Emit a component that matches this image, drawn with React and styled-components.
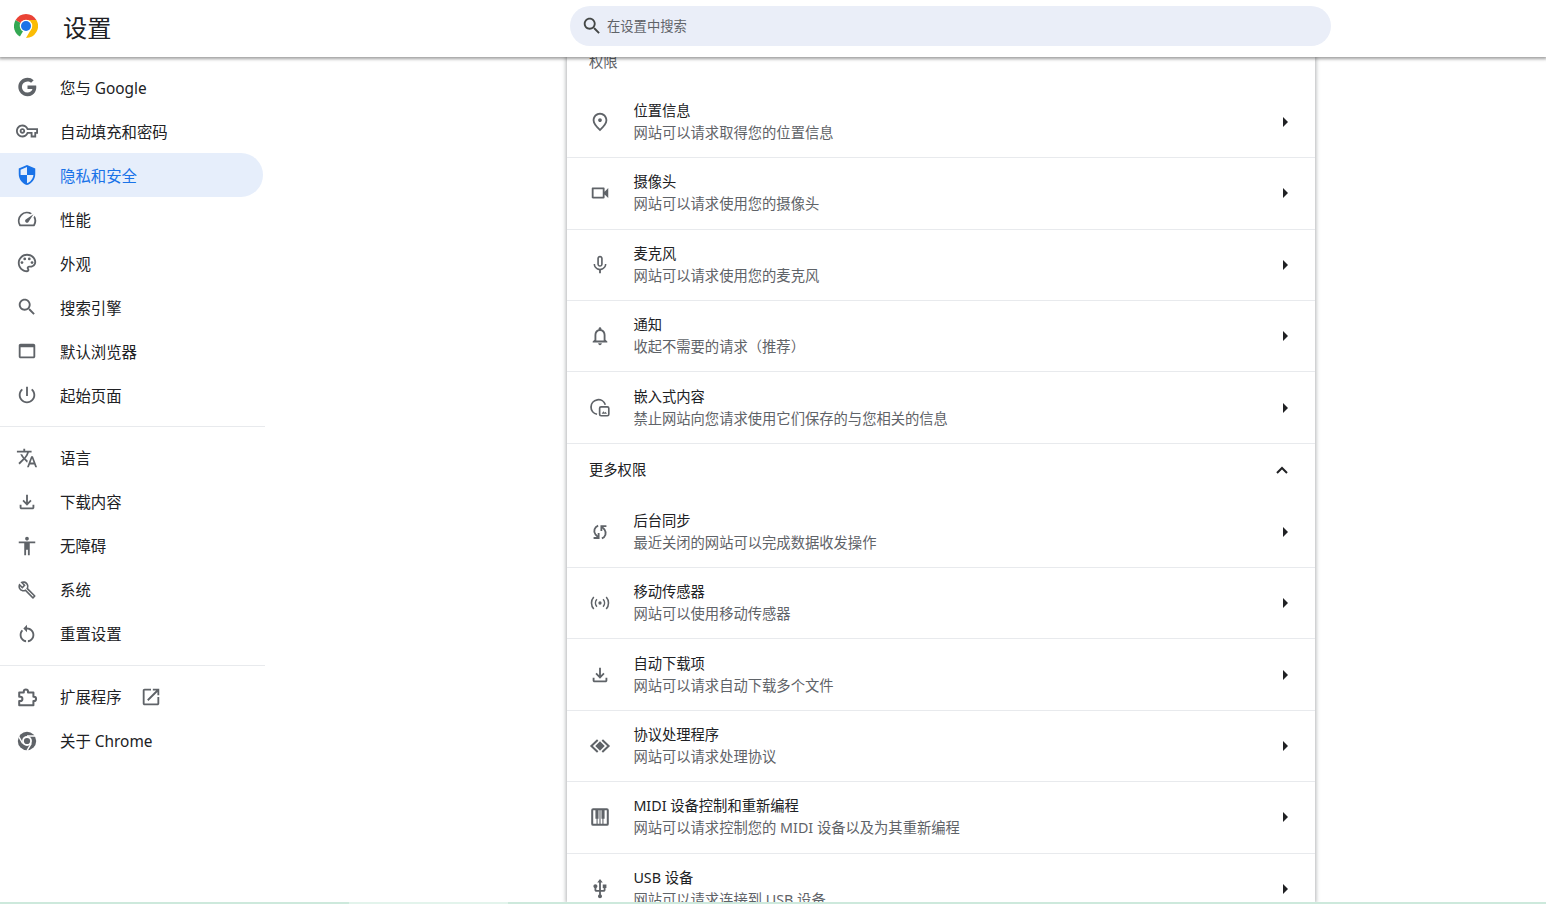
import React from "react";
import styled, { createGlobalStyle } from "styled-components";

const Global = createGlobalStyle`
  html, body { margin: 0; padding: 0; height: 100%; background: #fff; overflow: hidden; }
  #root { height: 100%; }
  * { box-sizing: border-box; }
  body { font-family: "Noto Sans", "Noto Sans CJK SC", "Liberation Sans", sans-serif; color: #202124; }
`;

const Page = styled.div`
  height: 100vh;
  display: flex;
  flex-direction: column;
  overflow: hidden;
`;
const Toolbar = styled.header`
  flex: 0 0 57px;
  height: 57px;
  display: flex;
  align-items: center;
  background: #fff;
  box-shadow: 0 1px 3px 1px rgba(0, 0, 0, 0.38);
  position: relative;
  z-index: 2;
`;
const Brand = styled.div`
  flex: 0 0 570px;
  display: flex;
  align-items: center;
  padding-left: 14px;
  gap: 25px;
`;
const Logo = styled.svg`
  width: 24px;
  height: 24px;
  margin-top: -5px;
  flex: none;
`;
const Title = styled.h1`
  margin: -2px 0 0;
  font-size: 24.2px;
  font-weight: 400;
  line-height: 32px;
  color: #202124;
`;
const SearchBox = styled.div`
  width: 761px;
  height: 40px;
  margin-top: -5px;
  border-radius: 20px;
  background: #eaeef8;
  display: flex;
  align-items: center;
  padding-left: 11px;
  gap: 4px;
  color: #444746;
`;
const SearchText = styled.span`
  font-size: 13.3px;
  line-height: 20px;
  margin-top: -1px;
  color: #5f6368;
`;
const Content = styled.div`
  flex: 1;
  min-height: 0;
  display: flex;
`;
const Sidebar = styled.nav`
  flex: 0 0 265px;
  padding-top: 8px;
`;
const NavItem = styled.div`
  height: 44px;
  width: 263px;
  display: flex;
  align-items: center;
  padding-left: 16px;
  gap: 22px;
  font-size: 15.4px;
  line-height: 22px;
  border-radius: 0 22px 22px 0;
  color: ${(p) => (p.$active ? "#1a73e8" : "#202124")};
  background: ${(p) => (p.$active ? "#e6eefb" : "transparent")};
  svg { color: ${(p) => (p.$active ? "#1a73e8" : "#5f6368")}; flex: none; }
`;
const NavLabel = styled.span`
  margin-top: ${(p) => (p.$upper ? "4px" : "2px")};
`;
const Divider = styled.div`
  height: 1px;
  background: #e8eaed;
  margin: 9px 0;
`;
const ExternalIcon = styled.span`
  display: flex;
  margin-left: -4px;
`;
const Main = styled.main`
  flex: 1;
  min-width: 0;
  overflow: hidden;
  padding: 0 0 0 302px;
`;
const Card = styled.section`
  width: 748px;
  height: 100%;
  overflow: hidden;
  background: #fff;
  box-shadow: 0 0 4px 1px rgba(60, 64, 67, 0.4);
`;
const CardInner = styled.div`
  margin-top: -23.2px;
`;
const SectionHead = styled.div`
  height: 53px;
  padding: 18px 22px 0;
  font-size: 14.3px;
  line-height: 20px;
  color: #5f6368;
`;
const MoreHead = styled.div`
  height: 52.8px;
  padding: 0 26px 0 22px;
  display: flex;
  align-items: center;
  justify-content: space-between;
  font-size: 14.3px;
  line-height: 22px;
  color: #202124;
  svg { display: block; }
`;
const Row = styled.div`
  height: 71.4px;
  display: flex;
  align-items: center;
  padding: 0 27px 0 22px;
  border-bottom: ${(p) => (p.$last ? "none" : "1px solid #e8eaed")};
  svg.lead { color: #5f6368; flex: none; }
`;
const RowText = styled.div`
  flex: 1;
  min-width: 0;
  margin-left: 22.4px;
  font-size: 14.3px;
  line-height: 22px;
`;
const RowTitle = styled.div`
  color: #202124;
`;
const RowSub = styled.div`
  color: #5f6368;
`;
const Arrow = styled.span`
  width: 0;
  height: 0;
  border-left: 5px solid #202124;
  border-top: 5px solid transparent;
  border-bottom: 5px solid transparent;
  flex: none;
`;
const BottomStrip = styled.div`
  flex: 0 0 2px;
  display: flex;
  position: relative;
  z-index: 3;
`;
const StripPart = styled.div`
  flex: ${(p) => (p.$w ? `0 0 ${p.$w}px` : "1")};
  background: ${(p) => p.$c};
`;

const Ico = ({ d, size = 22, vb = "0 0 24 24", className, children, fill = "currentColor" }) => (
  <svg className={className} width={size} height={size} viewBox={vb} fill={fill}>
    {d && <path d={d} />}
    {children}
  </svg>
);

const P = {
  google: "M12.545 10.239v3.821h5.445c-.712 2.315-2.647 3.972-5.445 3.972a6.033 6.033 0 110-12.064c1.498 0 2.866.549 3.921 1.453l2.814-2.814A9.969 9.969 0 0012.545 2C7.021 2 2.543 6.477 2.543 12s4.478 10 10.002 10c8.396 0 10.249-7.85 9.426-11.748l-9.426-.013z",
  key: "M22 19h-6v-4h-2.68c-1.14 2.42-3.6 4-6.32 4-3.86 0-7-3.14-7-7s3.14-7 7-7c2.72 0 5.17 1.58 6.32 4H24v6h-2v4zm-4-2h2v-4h2v-2H11.94l-.23-.67C11.01 8.34 9.11 7 7 7c-2.76 0-5 2.24-5 5s2.24 5 5 5c2.11 0 4.01-1.34 4.71-3.33l.23-.67H18v4zM7 15c-1.65 0-3-1.35-3-3s1.35-3 3-3 3 1.35 3 3-1.35 3-3 3zm0-4c-.55 0-1 .45-1 1s.45 1 1 1 1-.45 1-1-.45-1-1-1z",
  shield: "M12 1L3 5v6c0 5.55 3.84 10.74 9 12 5.16-1.26 9-6.45 9-12V5l-9-4zm0 10.99h7c-.53 4.12-3.28 7.79-7 8.94V12H5V6.3l7-3.11v8.8z",
  speed: "M20.38 8.57l-1.23 1.85a8 8 0 0 1-.22 7.58H5.07A8 8 0 0 1 15.58 6.85l1.85-1.23A10 10 0 0 0 3.35 19a2 2 0 0 0 1.72 1h13.85a2 2 0 0 0 1.74-1 10 10 0 0 0-.27-10.44zm-9.79 6.84a2 2 0 0 0 2.83 0l5.66-8.49-8.49 5.66a2 2 0 0 0 0 2.83z",
  palette: "M12 22C6.49 22 2 17.51 2 12S6.49 2 12 2s10 4.04 10 9c0 3.31-2.69 6-6 6h-1.77c-.28 0-.5.22-.5.5 0 .12.05.23.13.33.41.47.64 1.06.64 1.67 0 1.38-1.12 2.5-2.5 2.5zm0-18c-4.41 0-8 3.59-8 8s3.59 8 8 8c.28 0 .5-.22.5-.5 0-.16-.08-.28-.14-.35-.41-.46-.63-1.05-.63-1.65 0-1.38 1.12-2.5 2.5-2.5H16c2.21 0 4-1.79 4-4 0-3.86-3.59-7-8-7z",
  search: "M15.5 14h-.79l-.28-.27C15.41 12.59 16 11.11 16 9.5 16 5.91 13.09 3 9.5 3S3 5.91 3 9.5 5.91 16 9.5 16c1.61 0 3.09-.59 4.23-1.57l.27.28v.79l5 4.99L20.49 19l-4.99-5zm-6 0C7.01 14 5 11.99 5 9.5S7.01 5 9.5 5 14 7.01 14 9.5 11.99 14 9.5 14z",
  browser: "M19 4H5c-1.11 0-2 .9-2 2v12c0 1.1.89 2 2 2h14c1.1 0 2-.9 2-2V6c0-1.1-.89-2-2-2zm0 14H5V8h14v10z",
  power: "M13 3h-2v10h2V3zm4.83 2.17l-1.42 1.42C17.99 7.86 19 9.81 19 12c0 3.87-3.13 7-7 7s-7-3.13-7-7c0-2.19 1.01-4.14 2.58-5.42L6.17 5.17C4.23 6.82 3 9.26 3 12c0 4.97 4.03 9 9 9s9-4.03 9-9c0-2.74-1.23-5.18-3.17-6.83z",
  translate: "M12.87 15.07l-2.54-2.51.03-.03c1.74-1.94 2.98-4.17 3.71-6.53H17V4h-7V2H8v2H1v1.99h11.17C11.5 7.92 10.44 9.75 9 11.35 8.07 10.32 7.3 9.19 6.69 8h-2c.73 1.63 1.73 3.17 2.98 4.56l-5.09 5.02L4 19l5-5 3.11 3.11.76-2.04zM18.5 10h-2L12 22h2l1.12-3h4.75L21 22h2l-4.5-12zm-2.62 7l1.62-4.33L19.12 17h-3.24z",
  download: "M18 15v3H6v-3H4v3c0 1.1.9 2 2 2h12c1.1 0 2-.9 2-2v-3h-2zm-1-4l-1.41-1.41L13 12.17V4h-2v8.17L8.41 9.59 7 11l5 5 5-5z",
  access: "M12 2c1.1 0 2 .9 2 2s-.9 2-2 2-2-.9-2-2 .9-2 2-2zm9 7h-6v13h-2v-6h-2v6H9V9H3V7h18v2z",
  wrench: "M22.61 18.99l-9.08-9.08c.93-2.34.45-5.1-1.44-7C9.79.61 6.21.4 3.66 2.26L7.5 6.11 6.08 7.52 2.25 3.69C.39 6.23.6 9.82 2.9 12.11c1.86 1.86 4.57 2.35 6.89 1.48l9.11 9.11c.39.39 1.02.39 1.41 0l2.3-2.3c.4-.38.4-1.01 0-1.41zm-3 1.6l-9.46-9.46c-.61.45-1.29.72-2 .82-1.36.2-2.79-.21-3.83-1.25C3.37 9.76 2.93 8.5 3 7.26l3.09 3.09 4.24-4.24-3.09-3.09c1.24-.07 2.49.37 3.44 1.31 1.08 1.08 1.49 2.57 1.24 3.96-.12.71-.42 1.37-.88 1.96l9.45 9.45-.88.88z",
  restore: "M12 5V2L8 6l4 4V7c3.31 0 6 2.69 6 6 0 2.97-2.17 5.43-5 5.91v2.02c3.95-.49 7-3.85 7-7.93 0-4.42-3.58-8-8-8zm-6 8c0-1.65.67-3.15 1.76-4.24L6.34 7.34C4.9 8.79 4 10.79 4 13c0 4.08 3.05 7.44 7 7.93v-2.02c-2.83-.48-5-2.94-5-5.91z",
  open: "M19 19H5V5h7V3H5c-1.11 0-2 .9-2 2v14c0 1.1.89 2 2 2h14c1.1 0 2-.89 2-2v-7h-2v7zM14 3v2h3.59l-9.83 9.83 1.41 1.41L19 6.41V10h2V3h-7z",
  place: "M12 12c-1.1 0-2-.9-2-2s.9-2 2-2 2 .9 2 2-.9 2-2 2zm6-1.8C18 6.57 15.35 4 12 4s-6 2.57-6 6.2c0 2.34 1.95 5.44 6 9.14 4.05-3.7 6-6.8 6-9.14zM12 2c4.2 0 8 3.22 8 8.2 0 3.32-2.67 7.25-8 11.8-5.33-4.55-8-8.48-8-11.8C4 5.22 7.8 2 12 2z",
  video: "M15 8v8H5V8h10m1-2H4c-.55 0-1 .45-1 1v10c0 .55.45 1 1 1h12c.55 0 1-.45 1-1v-3.5l4 4v-11l-4 4V7c0-.55-.45-1-1-1z",
  mic: "M12 14c1.66 0 2.99-1.34 2.99-3L15 5c0-1.66-1.34-3-3-3S9 3.34 9 5v6c0 1.66 1.34 3 3 3zm-1.2-9.1c0-.66.54-1.2 1.2-1.2.66 0 1.2.54 1.2 1.2l-.01 6.2c0 .66-.53 1.2-1.19 1.2-.66 0-1.2-.54-1.2-1.2V4.9zm6.5 6.1c0 3-2.54 5.1-5.3 5.1S6.7 14 6.7 11H5c0 3.41 2.72 6.23 6 6.72V21h2v-3.28c3.28-.48 6-3.3 6-6.72h-1.7z",
  bell: "M12 22c1.1 0 2-.9 2-2h-4c0 1.1.9 2 2 2zm6-6v-5c0-3.07-1.63-5.64-4.5-6.32V4c0-.83-.67-1.5-1.5-1.5s-1.5.67-1.5 1.5v.68C7.64 5.36 6 7.92 6 11v5l-2 2v1h16v-1l-2-2zm-2 1H8v-6c0-2.48 1.51-4.5 4-4.5s4 2.02 4 4.5v6z",
  usb: "M15 7v4h1v2h-3V5h2l-3-4-3 4h2v8H8v-2.07c.7-.37 1.2-1.08 1.2-1.93 0-1.21-.99-2.2-2.2-2.2-1.21 0-2.2.99-2.2 2.2 0 .85.5 1.56 1.2 1.93V13c0 1.11.89 2 2 2h3v3.05c-.71.37-1.2 1.1-1.2 1.95 0 1.22.99 2.2 2.2 2.2 1.21 0 2.2-.98 2.2-2.2 0-.85-.49-1.58-1.2-1.95V15h3c1.11 0 2-.89 2-2v-2h1V7h-4z",
};

const ExtensionIcon = () => (
  <Ico fill="none">
    <path d="M3.5 7h5V6a2.3 2.3 0 0 1 4.6 0v1H19v4.8h.6a2.3 2.3 0 0 1 0 4.6H19V21H3.5v-4.6h1.2a2.3 2.3 0 0 0 0-4.6H3.5z" stroke="currentColor" strokeWidth="2.2" strokeLinejoin="round" />
  </Ico>
);
const MonoChrome = () => (
  <Ico>
    <circle cx="12" cy="12" r="10" />
    <circle cx="12" cy="12" r="5.4" fill="#fff" />
    <circle cx="12" cy="12" r="3.4" />
    <path d="M12 6.6h9M7.3 14.7L2.9 7M16.7 14.7L12 22.6" stroke="#fff" strokeWidth="1.5" fill="none" />
  </Ico>
);
const ChromeLogo = () => (
  <Logo viewBox="0 0 48 48">
    <path d="M24 24L11.9 44.9A24 24 0 0 1 3.2 12z" fill="#34a853" />
    <path d="M24 0a24 24 0 0 1 20.8 12H24A12 12 0 0 0 13.6 18L3.2 12A24 24 0 0 1 24 0z" fill="#ea4335" />
    <path d="M44.8 12A24 24 0 0 1 24 48l10.4-18A12 12 0 0 0 24 12z" fill="#fbbc04" />
    <circle cx="24" cy="24" r="12.5" fill="#fff" />
    <circle cx="24" cy="24" r="10" fill="#1a73e8" />
  </Logo>
);
const EmbedIcon = () => (
  <Ico className="lead">
    <path d="M8.8 18.8A8 8 0 1 1 17.8 8.4" fill="none" stroke="currentColor" strokeWidth="1.9" />
    <rect x="11.6" y="10.8" width="10" height="9.6" rx="1.6" fill="#fff" stroke="currentColor" strokeWidth="1.8" />
    <path d="M13.8 18.2l1.9-2.6 1.4 1.6 1-1 1.5 2z" />
  </Ico>
);
const SyncIcon = () => (
  <Ico className="lead">
    <g fill="none" stroke="currentColor" strokeWidth="2">
      <path d="M14 19c4-1.5 5.5-6 3-9.5L14 6.5" />
      <path d="M19 5.5h-5.5V11" />
      <path d="M10 5c-4 1.5-5.5 6-3 9.5l3 3" />
      <path d="M5 18.5h5.5V13" />
    </g>
  </Ico>
);
const SensorIcon = () => (
  <Ico className="lead">
    <circle cx="12" cy="12" r="1.8" />
    <g fill="none" stroke="currentColor" strokeWidth="1.7">
      <path d="M8.6 8a6 6 0 0 0 0 8M15.4 8a6 6 0 0 1 0 8" />
      <path d="M5.2 5.4a10 10 0 0 0 0 13.2M18.8 5.4a10 10 0 0 1 0 13.2" />
    </g>
  </Ico>
);
const ProtocolIcon = () => (
  <Ico className="lead">
    <path d="M9.5 5.5L2.6 12l6.9 6.5M14.5 5.5l6.9 6.5-6.9 6.5" fill="none" stroke="currentColor" strokeWidth="2.2" />
    <path d="M12 6.8L17.2 12 12 17.2 6.8 12z" />
  </Ico>
);
const PianoIcon = () => (
  <Ico className="lead">
    <rect x="3.5" y="3.5" width="17" height="17" rx="1" fill="none" stroke="currentColor" strokeWidth="2.2" />
    <path d="M7 4h3.4v10H7zM13.6 4H17v10h-3.4zM8.2 14h1.2v6H8.2zM14.6 14h1.2v6h-1.2zM11.4 4h1.2v16h-1.2z" />
  </Ico>
);

const top = [
  ["您与 Google", <Ico d={P.google} />],
  ["自动填充和密码", <Ico d={P.key} />],
  ["隐私和安全", <Ico d={P.shield} />, true],
  ["性能", <Ico d={P.speed} />],
  ["外观", <Ico d={P.palette}>
    <circle cx="6.5" cy="11.5" r="1.5" /><circle cx="9.5" cy="7.5" r="1.5" /><circle cx="14.5" cy="7.5" r="1.5" /><circle cx="17.5" cy="11.5" r="1.5" />
  </Ico>],
  ["搜索引擎", <Ico d={P.search} />],
  ["默认浏览器", <Ico d={P.browser} />],
  ["起始页面", <Ico d={P.power} />],
];
const middle = [
  ["语言", <Ico d={P.translate} />],
  ["下载内容", <Ico d={P.download} />],
  ["无障碍", <Ico d={P.access} />],
  ["系统", <Ico d={P.wrench} vb="-2 -2 28 28" />],
  ["重置设置", <Ico d={P.restore} />],
];
const perms = [
  ["位置信息", "网站可以请求取得您的位置信息", <Ico className="lead" d={P.place} />],
  ["摄像头", "网站可以请求使用您的摄像头", <Ico className="lead" d={P.video} />],
  ["麦克风", "网站可以请求使用您的麦克风", <Ico className="lead" d={P.mic} />],
  ["通知", "收起不需要的请求（推荐）", <Ico className="lead" d={P.bell} />],
  ["嵌入式内容", "禁止网站向您请求使用它们保存的与您相关的信息", <EmbedIcon />],
];
const more = [
  ["后台同步", "最近关闭的网站可以完成数据收发操作", <SyncIcon />],
  ["移动传感器", "网站可以使用移动传感器", <SensorIcon />],
  ["自动下载项", "网站可以请求自动下载多个文件", <Ico className="lead" d={P.download} />],
  ["协议处理程序", "网站可以请求处理协议", <ProtocolIcon />],
  ["MIDI 设备控制和重新编程", "网站可以请求控制您的 MIDI 设备以及为其重新编程", <PianoIcon />],
  ["USB 设备", "网站可以请求连接到 USB 设备", <Ico className="lead" d={P.usb} />],
];

const Nav = ({ items, upper }) =>
  items.map(([label, icon, active]) => (
    <NavItem key={label} $active={active}>
      {icon}
      <NavLabel $upper={upper}>{label}</NavLabel>
    </NavItem>
  ));

const PermRow = ({ title, sub, icon, last }) => (
  <Row $last={last}>
    {icon}
    <RowText>
      <RowTitle>{title}</RowTitle>
      <RowSub>{sub}</RowSub>
    </RowText>
    <Arrow />
  </Row>
);

export default function App() {
  return (
    <Page>
      <Global />
      <Toolbar>
        <Brand>
          <ChromeLogo />
          <Title>设置</Title>
        </Brand>
        <SearchBox>
          <Ico d={P.search} />
          <SearchText>在设置中搜索</SearchText>
        </SearchBox>
      </Toolbar>
      <Content>
        <Sidebar>
          <Nav items={top} upper />
          <Divider />
          <Nav items={middle} />
          <Divider />
          <NavItem>
            <ExtensionIcon />
            <NavLabel>扩展程序</NavLabel>
            <ExternalIcon><Ico d={P.open} /></ExternalIcon>
          </NavItem>
          <NavItem>
            <MonoChrome />
            <NavLabel>关于 Chrome</NavLabel>
          </NavItem>
        </Sidebar>
        <Main>
          <Card>
            <CardInner>
              <SectionHead>权限</SectionHead>
              {perms.map(([t, s, i]) => <PermRow key={t} title={t} sub={s} icon={i} />)}
              <MoreHead>
                <span>更多权限</span>
                <svg width="14" height="14" viewBox="0 0 14 14" fill="none" stroke="#202124" strokeWidth="2"><path d="M2 10l5-5 5 5" /></svg>
              </MoreHead>
              {more.map(([t, s, i], n) => <PermRow key={t} title={t} sub={s} icon={i} last={n === more.length - 1} />)}
            </CardInner>
          </Card>
        </Main>
      </Content>
      <BottomStrip>
        <StripPart $w={349} $c="#cde9dc" />
        <StripPart $w={159} $c="#e3f4ec" />
        <StripPart $c="#cde9dc" />
      </BottomStrip>
    </Page>
  );
}
